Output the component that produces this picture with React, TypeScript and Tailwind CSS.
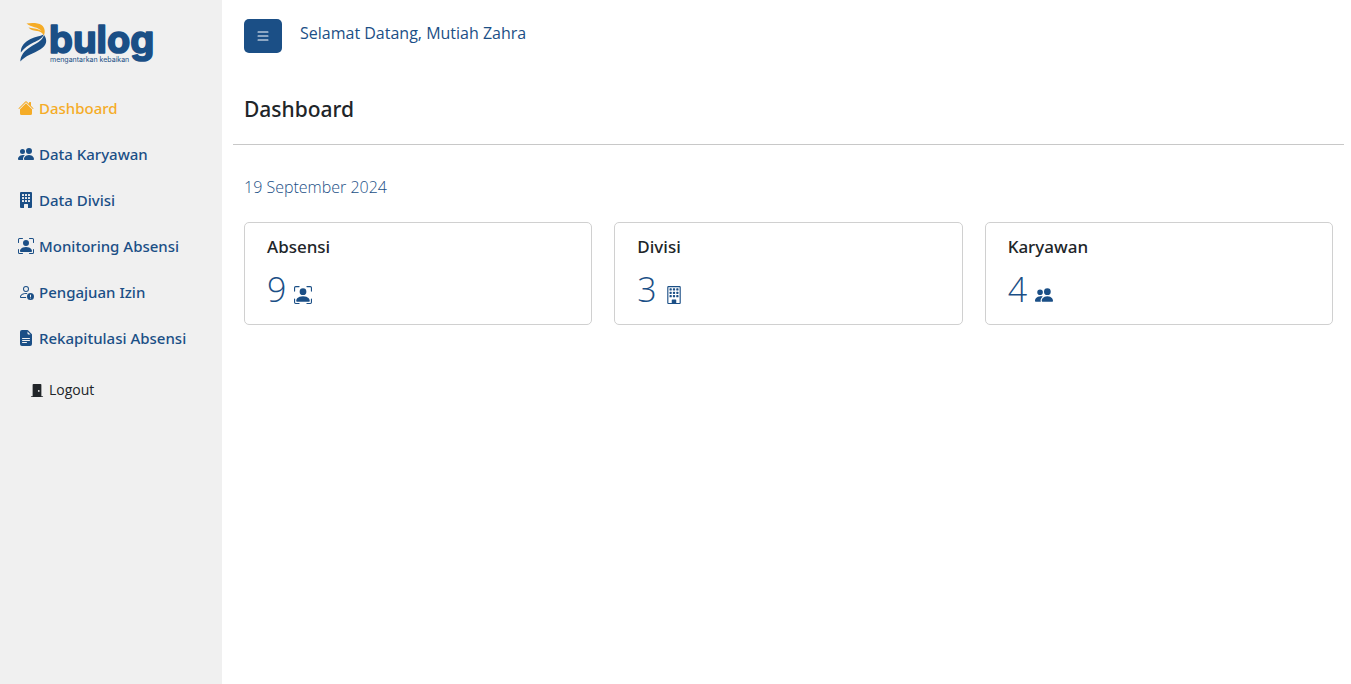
import type { IconType } from "react-icons";
import {
  BsBuilding,
  BsBuildingFill,
  BsDoorClosedFill,
  BsFileEarmarkTextFill,
  BsHouseFill,
  BsList,
  BsPeopleFill,
  BsPersonBoundingBox,
  BsPersonExclamation,
} from "react-icons/bs";

type NavItem = { label: string; icon: IconType; active?: boolean };
type Stat = { label: string; value: number; icon: IconType };

const navItems: NavItem[] = [
  { label: "Dashboard", icon: BsHouseFill, active: true },
  { label: "Data Karyawan", icon: BsPeopleFill },
  { label: "Data Divisi", icon: BsBuildingFill },
  { label: "Monitoring Absensi", icon: BsPersonBoundingBox },
  { label: "Pengajuan Izin", icon: BsPersonExclamation },
  { label: "Rekapitulasi Absensi", icon: BsFileEarmarkTextFill },
];

const stats: Stat[] = [
  { label: "Absensi", value: 9, icon: BsPersonBoundingBox },
  { label: "Divisi", value: 3, icon: BsBuilding },
  { label: "Karyawan", value: 4, icon: BsPeopleFill },
];

function Logo() {
  return (
    <svg width="144" height="56" viewBox="-2 -8 144 56" role="img" aria-label="bulog">
      <path
        d="M6.500 2.500C11 1.700 18 1.600 21.500 4C25 6.500 25.500 11 23.800 14.500C22.800 11.800 20 10.200 15.500 9.700C11.500 9.300 9.500 7.800 8.500 6.200C12 7.500 16.500 7 21.500 10C18.500 6 11 6.300 6.500 2.500Z"
        fill="#f5ac27"
      />
      <path
        d="M.8 31.500C.8 25 4.500 21 10.500 18C15.500 15.500 20 15.400 23.500 13.400C22.800 17.300 18.500 19 13.500 21.500C8.500 24 4 27.200.8 31.500Z"
        fill="#1b4f86"
      />
      <path
        d="M.3 40.500C.5 34.500 4 30 10 26.200C16 22.500 22.300 20 24 14C28 19.500 26.500 24.500 20.500 28.300C13.500 32.700 5.500 34.500.3 40.500Z"
        fill="#1b4f86"
      />
      <text
        x="29"
        y="32"
        fontFamily="Inter, sans-serif"
        fontWeight="700"
        fontSize="38"
        fill="#1b4f86"
        stroke="#1b4f86"
        strokeWidth="1.600"
        strokeLinejoin="round"
      >
        bulog
      </text>
      <text x="30" y="41" fontFamily="Inter, sans-serif" fontWeight="400" fontSize="7" fill="#1b4f86">
        mengantarkan kebaikan
      </text>
    </svg>
  );
}

function Sidebar() {
  return (
    <aside className="w-[222px] shrink-0 bg-[#f0f0f0] px-[18px] pt-[13px]">
      <Logo />
      <nav className="mt-4">
        <ul>
          {navItems.map(({ label, icon: Icon, active }) => (
            <li key={label}>
              <a
                href="#"
                className={
                  active
                    ? "flex h-[46px] items-center gap-[5px] font-['Noto_Sans',sans-serif] text-[15px] font-medium whitespace-nowrap text-[#f5ac27]"
                    : "flex h-[46px] items-center gap-[5px] font-['Noto_Sans',sans-serif] text-[15px] font-medium whitespace-nowrap text-[#1b4f86]"
                }
              >
                <Icon className="size-4 shrink-0" />
                {label}
              </a>
            </li>
          ))}
        </ul>
      </nav>
      <button type="button" className="mt-[19px] ml-3 flex items-center gap-[5px] text-sm text-[#212529]">
        <BsDoorClosedFill className="size-[14px]" />
        Logout
      </button>
    </aside>
  );
}

function StatCard({ label, value, icon: Icon }: Stat) {
  return (
    <section className="rounded-[5px] border border-[#d0d0d0] px-[22px] pt-3 pb-[14px] text-[#212529]">
      <h2 className="font-['Noto_Sans',sans-serif] text-[17px] leading-6 font-medium">{label}</h2>
      <p className="mt-[10px] flex items-end gap-2 text-[#1b4f86]">
        <span className="text-[34px] leading-[41px] font-light">{value}</span>
        <Icon className="mb-[6px] size-[18px]" />
      </p>
    </section>
  );
}

export default function App() {
  return (
    <div className="flex min-h-screen bg-white font-['Open_Sans','Noto_Sans',sans-serif]">
      <Sidebar />
      <main className="min-w-0 flex-1 pt-[19px] pr-[7px] pl-[11px]">
        <header className="flex items-start gap-[18px] px-[11px]">
          <button
            type="button"
            aria-label="Menu"
            className="flex h-[34px] w-[38px] items-center justify-center rounded-[5px] bg-[#1b4f86] text-white"
          >
            <BsList className="size-4" />
          </button>
          <p className="pt-[2px] text-base text-[#1b4f86]">Selamat Datang, Mutiah Zahra</p>
        </header>
        <h1 className="mt-10 px-[11px] font-['Noto_Sans',sans-serif] text-[21px] leading-8 font-medium text-[#212529]">
          Dashboard
        </h1>
        <hr className="mt-[19px] border-[#c8c8c8]" />
        <div className="px-[11px]">
          <p className="mt-[30px] text-base leading-6 font-light text-[#1b4f86]">19 September 2024</p>
          <div className="mt-[23px] grid grid-cols-3 gap-[22px]">
            {stats.map((stat) => (
              <StatCard key={stat.label} {...stat} />
            ))}
          </div>
        </div>
      </main>
    </div>
  );
}
